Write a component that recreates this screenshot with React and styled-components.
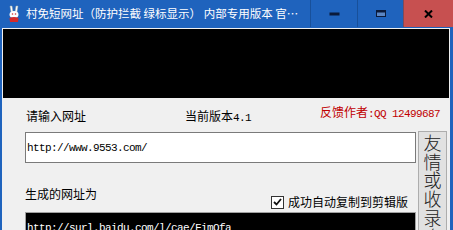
import React from 'react';
import styled, { createGlobalStyle } from 'styled-components';

const GlobalStyle = createGlobalStyle`
  html, body {
    margin: 0;
    padding: 0;
    background: #ffffff;
  }
  body {
    font-family: "Noto Sans CJK SC", "Noto Sans", sans-serif;
    font-size: 12px;
    color: #000;
  }
`;

const mono = `"Liberation Mono", "DejaVu Sans Mono", monospace`;

const Window = styled.div`
  width: 453px;
  height: 230px;
  overflow: hidden;
  background: #1f63bd;
  display: flex;
  flex-direction: column;
`;

const TitleBar = styled.div`
  height: 28px;
  flex-shrink: 0;
  display: flex;
  align-items: stretch;
  color: #fff;
`;

const AppIcon = styled.div`
  width: 14px;
  margin: 0 5px 0 7px;
  display: flex;
  align-items: center;
`;

const Title = styled.div`
  flex: 1;
  min-width: 0;
  padding-right: 4px;
  font-size: 11.5px;
  line-height: 27px;
  white-space: nowrap;
  overflow: hidden;
  text-overflow: ellipsis;
`;

const CaptionButton = styled.div`
  width: ${p => p.w}px;
  height: 27px;
  flex-shrink: 0;
  display: flex;
  align-items: center;
  justify-content: center;
  background: ${p => (p.close ? '#c75050' : 'transparent')};
  border-left: 1px solid ${p => (p.close ? '#7d4a5a' : '#18509a')};
  box-sizing: border-box;
`;

const Client = styled.div`
  flex: 1;
  margin: 0 3px 0 2px;
  background: #f0f0f0;
  display: flex;
  flex-direction: column;
  min-height: 0;
`;

const Screen = styled.div`
  height: 69px;
  margin: 1px;
  background: #000;
  flex-shrink: 0;
`;

const InfoRow = styled.div`
  display: grid;
  grid-template-columns: 159px 135px auto;
  padding: 5px 0 0 24px;
  height: 20px;
`;

const Label = styled.div`
  margin-top: ${p => p.offset || 0}px;
  line-height: 16px;
  white-space: nowrap;
`;

const Mono = styled.span`
  font-family: ${mono};
  font-size: 11px;
  letter-spacing: -0.6px;
`;

const Feedback = styled(Label)`
  color: #c00000;
`;

const Main = styled.div`
  flex: 1;
  display: grid;
  grid-template-columns: 391px 29px;
  column-gap: 2px;
  padding-left: 23px;
  margin-top: 7px;
`;

const Column = styled.div`
  display: flex;
  flex-direction: column;
  padding-top: 1px;
`;

const UrlInput = styled.div`
  height: 31px;
  box-sizing: border-box;
  background: #fff;
  border: 1px solid #7a7a7a;
  padding-left: 1px;
  display: flex;
  align-items: center;
  font-family: ${mono};
  font-size: 11px;
  letter-spacing: -0.6px;
`;

const ResultHead = styled.div`
  display: flex;
  justify-content: space-between;
  align-items: flex-start;
  margin-top: 23px;
  padding-right: 8px;
`;

const Check = styled.div`
  display: flex;
  align-items: center;
  gap: 4px;
  margin-top: 8px;
  line-height: 16px;
`;

const Box = styled.div`
  width: 13px;
  height: 13px;
  box-sizing: border-box;
  border: 1px solid #333;
  background: #fff;
  display: flex;
  align-items: center;
  justify-content: center;
`;

const Output = styled.div`
  margin-top: 2px;
  height: 40px;
  box-sizing: border-box;
  background: #000;
  border: 1px solid #a0a0a0;
  color: #fff;
  padding: 8px 1px 0;
  font-family: ${mono};
  font-size: 11px;
  letter-spacing: -0.6px;
  line-height: 14px;
`;

const SideButton = styled.div`
  background: #e1e1e1;
  border: 1px solid #adadad;
  box-sizing: border-box;
  padding-top: 1px;
  font-size: 18px;
  line-height: 18.7px;
  text-align: center;
  color: #222;
  word-break: break-all;
  font-weight: 300;
`;

const Rabbit = () => (
  <svg width="14" height="18" viewBox="0 0 14 18">
    <path d="M3 1 L5 1 L6 7 L4 7 Z" fill="#fff" stroke="#9aa" strokeWidth="0.5" />
    <path d="M9 1 L11 1 L10 7 L8 7 Z" fill="#fff" stroke="#9aa" strokeWidth="0.5" />
    <ellipse cx="7" cy="9.5" rx="4.5" ry="3.5" fill="#fff" />
    <circle cx="5.5" cy="9" r="0.8" fill="#c33" />
    <circle cx="8.5" cy="9" r="0.8" fill="#c33" />
    <path d="M2.5 13 Q7 11 11.5 13 L11 17 L3 17 Z" fill="#d42a2a" />
  </svg>
);

export default function App() {
  return (
    <>
      <GlobalStyle />
      <Window>
        <TitleBar>
          <AppIcon><Rabbit /></AppIcon>
          <Title>村免短网址（防护拦截 绿标显示） 内部专用版本 官方正式发布</Title>
          <CaptionButton w={47}>
            <svg width="11" height="4"><rect x="0.5" y="0.5" width="10" height="3" fill="#0a1a3a" /></svg>
          </CaptionButton>
          <CaptionButton w={46}>
            <svg width="10" height="7"><rect x="0.5" y="0.5" width="9" height="6" fill="#5a86c4" stroke="#0a1a3a" strokeWidth="1" /><rect x="1" y="1" width="8" height="1.5" fill="#0a1a3a" /></svg>
          </CaptionButton>
          <CaptionButton w={50} close>
            <svg width="9" height="8" viewBox="0 0 9 8"><path d="M1 0.5 L8 7.5 M8 0.5 L1 7.5" stroke="#000" strokeWidth="2" /></svg>
          </CaptionButton>
        </TitleBar>
        <Client>
          <Screen />
          <InfoRow>
            <Label offset={4}>请输入网址</Label>
            <Label offset={4}>当前版本<Mono>4.1</Mono></Label>
            <Feedback>反馈作者<Mono>:QQ 12499687</Mono></Feedback>
          </InfoRow>
          <Main>
            <Column>
              <UrlInput>http://www.9553.com/</UrlInput>
              <ResultHead>
                <Label>生成的网址为</Label>
                <Check>
                  <Box>
                    <svg width="9" height="8" viewBox="0 0 9 8"><path d="M1 4 L3.5 6.5 L8 1" fill="none" stroke="#111" strokeWidth="1.8" /></svg>
                  </Box>
                  成功自动复制到剪辑版
                </Check>
              </ResultHead>
              <Output>http://surl.baidu.com/l/cae/FimQfa</Output>
            </Column>
            <SideButton>友情或收录合作</SideButton>
          </Main>
        </Client>
      </Window>
    </>
  );
}
